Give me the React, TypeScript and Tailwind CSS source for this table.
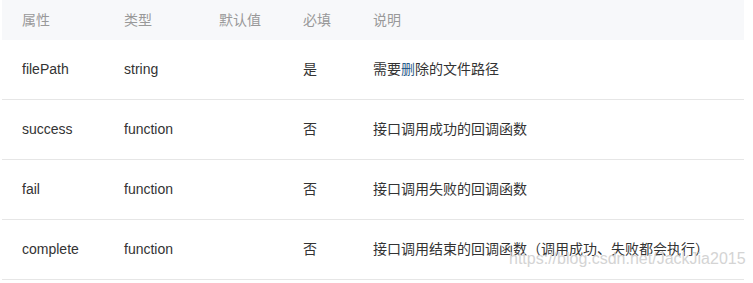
const rows = [
  { name: "filePath", type: "string", def: "", req: "是", desc: <>需要<span className="text-[#2b5b8a]">删</span>除的文件路径</> },
  { name: "success", type: "function", def: "", req: "否", desc: <>接口调用成功的回调函数</> },
  { name: "fail", type: "function", def: "", req: "否", desc: <>接口调用失败的回调函数</> },
  { name: "complete", type: "function", def: "", req: "否", desc: <>接口调用结束的回调函数（调用成功、失败都会执行）</> },
];

const cols = "grid grid-cols-[102px_95px_84px_70px_391px]";

export default function App() {
  return (
    <div
      className="relative h-[283px] w-[753px] overflow-hidden bg-white pl-[2px] text-[14px]"
      style={{ fontFamily: '"Liberation Sans", "Noto Sans CJK SC", sans-serif' }}
    >
      <div className="w-[742px]">
        <div className={`${cols} h-[40px] items-center bg-[#f7f8fa] text-[#999999]`}>
          <div className="pl-5">属性</div>
          <div className="pl-5">类型</div>
          <div className="pl-5">默认值</div>
          <div className="pl-5">必填</div>
          <div className="pl-5">说明</div>
        </div>
        {rows.map(r => (
          <div key={r.name} className={`${cols} h-[60px] items-center border-b border-[#e6e6e6] text-[#333333]`}>
            <div className="pl-5">{r.name}</div>
            <div className="pl-5">{r.type}</div>
            <div className="pl-5">{r.def}</div>
            <div className="pl-5">{r.req}</div>
            <div className="pl-5 whitespace-nowrap">{r.desc}</div>
          </div>
        ))}
      </div>
      <div className="absolute left-[509px] top-[250px] text-[16px] leading-[18px] text-[#d4d4d4] whitespace-nowrap">
        https://blog.csdn.net/JackJia2015
      </div>
    </div>
  );
}
